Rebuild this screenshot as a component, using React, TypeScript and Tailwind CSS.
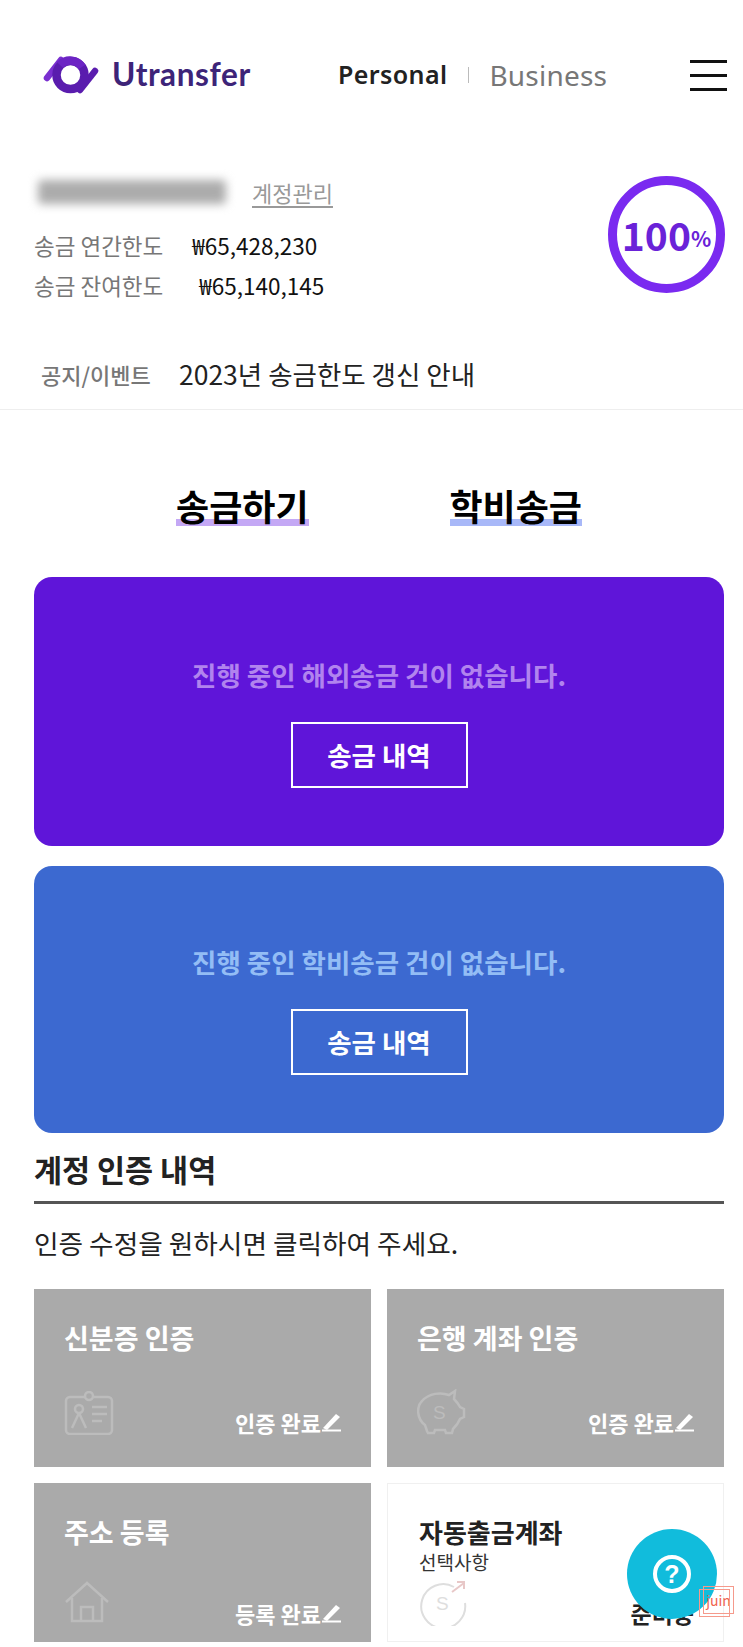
import React from "react";

const Logo = () => (
  <svg width="56" height="40" viewBox="0 0 56 40" fill="none" className="shrink-0">
    <path d="M4 23 L18 5" stroke="#7a2fd0" strokeWidth="6.5" strokeLinecap="round" />
    <path d="M52 16 L37 35" stroke="#5a1cae" strokeWidth="6.5" strokeLinecap="round" />
    <circle cx="27.5" cy="20" r="14" stroke="#5a1cae" strokeWidth="8.5" />
    <path d="M17 10 A14 14 0 0 1 39 12" stroke="#6c24c4" strokeWidth="8.5" />
  </svg>
);

const Pencil = () => (
  <svg width="22" height="20" viewBox="0 0 22 20" fill="none" className="shrink-0">
    <path d="M2 16 L15 2 L19 5 L6 18 Z" fill="#fff" />
    <path d="M1 18.5 H20" stroke="#fff" strokeWidth="2" />
  </svg>
);

const IdIcon = () => (
  <svg width="50" height="44" viewBox="0 0 50 44" fill="none" stroke="#bcbcbc" strokeWidth="2.5" className="shrink-0">
    <rect x="2" y="6" width="46" height="37" rx="4" />
    <circle cx="25" cy="5" r="4" fill="#aaa" />
    <circle cx="15" cy="18" r="4" />
    <path d="M15 22 L8 37 M15 22 L22 37" />
    <path d="M28 16 H43 M28 23 H43 M28 30 H38" />
  </svg>
);

const PigIcon = () => (
  <svg width="50" height="46" viewBox="0 0 50 46" fill="none" stroke="#bcbcbc" strokeWidth="2.5" className="shrink-0">
    <path d="M10 42 L8 36 C0 30 -1 18 5 12 C12 4 24 3 32 6 L38 2 L37 10 C40 13 42 16 43 18 L47 20 V28 L43 30 C41 35 38 38 36 40 L35 44 H29 L28 41 H18 L17 44 H11 Z" />
    <text x="16" y="30" fontSize="19" fill="#bcbcbc" stroke="none" fontFamily="Liberation Sans, sans-serif">S</text>
  </svg>
);

const HouseIcon = () => (
  <svg width="46" height="42" viewBox="0 0 46 42" fill="none" stroke="#bcbcbc" strokeWidth="2.5" className="shrink-0">
    <path d="M2 21 L23 2 L44 21" />
    <path d="M8 17 V40 H38 V17" />
    <path d="M17 40 V26 H29 V40" />
  </svg>
);

const DollarIcon = () => (
  <svg width="48" height="46" viewBox="0 0 48 46" fill="none" stroke="#dedede" strokeWidth="2" className="shrink-0">
    <path d="M35 7 A22 22 0 1 0 46 23" />
    <path d="M33 12 L45 3 M38 2 H45 V9" stroke="#e8c8c8" />
    <text x="17" y="30" fontSize="19" fill="#dedede" stroke="none" fontFamily="Liberation Sans, sans-serif">S</text>
  </svg>
);

const Help = () => (
  <svg width="40" height="40" viewBox="0 0 40 40" fill="none">
    <circle cx="20" cy="20" r="17" stroke="#fff" strokeWidth="4" />
    <text x="20" y="29" textAnchor="middle" fontSize="25" fontWeight="700" fill="#fff" fontFamily="Liberation Sans, sans-serif">?</text>
  </svg>
);

const Pending = ({ label, bg, text, h, top }: { label: string; bg: string; text: string; h: string; top: string }) => (
  <div className={`flex flex-col items-center rounded-[18px] ${h} ${top} ${bg}`}>
    <p className={`text-[26.5px] leading-[34px] font-bold ${text}`}>{label}</p>
    <div className="mt-[30px] flex h-[66px] w-[177px] items-center justify-center border-2 border-white text-[26.5px] font-bold text-white">
      송금 내역
    </div>
  </div>
);

const Done = ({ title, status, icon, h, pb, iconMb }: { title: string; status: string; icon: React.ReactNode; h: string; pb: string; iconMb: string }) => (
  <div className={`flex flex-col justify-between bg-[#aaaaaa] pt-[31px] pr-[28px] pl-[30px] ${h} ${pb}`}>
    <p className="text-[27px] leading-[36px] font-bold text-white">{title}</p>
    <div className="flex items-end justify-between">
      <div className={iconMb}>{icon}</div>
      <div className="flex items-center text-[22px] leading-[32px] font-bold text-white">
        {status}
        <Pencil />
      </div>
    </div>
  </div>
);

export default function App() {
  return (
    <div className="relative h-[1647px] w-[743px] overflow-hidden bg-white font-['Noto_Sans_CJK_KR',sans-serif] text-[#111]">
      <header className="flex h-[150px] items-center pr-[16px] pl-[43px]">
        <Logo />
        <span className="ml-[13px] w-[231px] font-['Lato',sans-serif] text-[31.5px] font-bold tracking-[0.6px] text-[#3d2478]">Utransfer</span>
        <span className="ml-[-5px] font-['Noto_Sans',sans-serif] text-[25px] font-semibold tracking-[0.4px] text-[#222]">Personal</span>
        <span className="ml-[21px] h-[16px] w-px bg-[#bbb]" />
        <span className="ml-[20px] font-['Noto_Sans',sans-serif] text-[28px] tracking-[0.2px] text-[#777]">Business</span>
        <div className="ml-auto flex w-[37px] flex-col gap-[11px]">
          <span className="h-[3px] bg-[#111]" />
          <span className="h-[3px] bg-[#111]" />
          <span className="h-[3px] bg-[#111]" />
        </div>
      </header>

      <section className="flex h-[193px] justify-between pt-[26px] pr-[18px] pl-[34px]">
        <div>
          <div className="flex h-[32px] items-center">
            <div className="ml-[4px] h-[24px] w-[188px] rounded-sm bg-[#acacac] blur-[5px]" />
            <span className="ml-[26px] text-[22px] text-[#999] underline underline-offset-4">계정관리</span>
          </div>
          <div className="mt-[18px] flex h-[40px] items-center text-[22.5px] text-[#777]">
            송금 연간한도
            <span className="ml-[29px] text-[22.5px] text-[#111]">₩65,428,230</span>
          </div>
          <div className="flex h-[40px] items-center text-[22.5px] text-[#777]">
            송금 잔여한도
            <span className="ml-[36px] text-[22.5px] text-[#111]">₩65,140,145</span>
          </div>
        </div>
        <div className="flex h-[117px] w-[117px] items-center justify-center rounded-full border-[9px] border-[#7a2af0] font-bold text-[#6a22d8]">
          <span className="text-[39px] leading-none">100</span>
          <span className="mt-[8px] text-[21px] leading-none">%</span>
        </div>
      </section>

      <section className="flex h-[67px] items-start border-b border-[#eeeeee] pl-[41px]">
        <span className="w-[138px] text-[22px] leading-[62px] font-medium text-[#777]">공지/이벤트</span>
        <span className="text-[26.5px] leading-[62px] text-[#222]">2023년 송금한도 갱신 안내</span>
      </section>

      <nav className="flex h-[167px] justify-center gap-[141px] pt-[70px] pr-[19px] pl-[34px]">
        <span className="h-[50px] bg-[linear-gradient(transparent_78%,#c4a8f5_78%,#c4a8f5_92%,transparent_92%)] text-[36px] leading-[50px] font-bold text-black">송금하기</span>
        <span className="h-[50px] bg-[linear-gradient(transparent_78%,#a8b8f8_78%,#a8b8f8_92%,transparent_92%)] text-[36px] leading-[50px] font-bold text-black">학비송금</span>
      </nav>

      <main className="flex flex-col pr-[19px] pl-[34px]">
        <Pending label="진행 중인 해외송금 건이 없습니다." bg="bg-[#5f15d9]" text="text-[#b184ee]" h="h-[269px]" top="pt-[81px]" />
        <div className="h-[20px]" />
        <Pending label="진행 중인 학비송금 건이 없습니다." bg="bg-[#3c69d0]" text="text-[#93bdf5]" h="h-[267px]" top="pt-[79px]" />

        <h2 className="mt-[14px] text-[30.5px] leading-[44px] font-bold text-[#222]">계정 인증 내역</h2>
        <div className="mt-[10px] h-[3px] bg-[#555]" />
        <p className="mt-[20px] text-[26.7px] leading-[38px] text-[#222]">인증 수정을 원하시면 클릭하여 주세요.</p>

        <div className="mt-[27px] grid grid-cols-2 gap-4">
          <Done title="신분증 인증" status="인증 완료" icon={<IdIcon />} h="h-[178px]" pb="pb-[29px]" iconMb="mb-[3px]" />
          <Done title="은행 계좌 인증" status="인증 완료" icon={<PigIcon />} h="h-[178px]" pb="pb-[29px]" iconMb="mb-[3px]" />
          <Done title="주소 등록" status="등록 완료" icon={<HouseIcon />} h="h-[159px]" pb="pb-[13px]" iconMb="mb-[6px]" />
          <div className="flex h-[159px] flex-col border border-[#f0f0f0] pt-[28px] pr-[29px] pl-[31px]">
            <p className="text-[26px] leading-[40px] font-bold text-[#222]">자동출금계좌</p>
            <p className="text-[19px] leading-[20px] text-[#333]">선택사항</p>
            <div className="mt-[8px] flex items-start justify-between">
              <DollarIcon />
              <span className="mt-[17px] text-[23px] leading-[32px] font-bold text-[#222]">준비중</span>
            </div>
          </div>
        </div>
      </main>

      <div className="absolute top-[1529px] left-[627px] flex h-[90px] w-[90px] items-center justify-center rounded-full bg-[#11bcdc]">
        <Help />
      </div>
      <div className="absolute top-[1586px] left-[703px] flex h-[28px] w-[31px] items-center justify-center border border-[#f59a8c] text-[14px] leading-none text-[#f0654f]">
        juin
      </div>
      <div className="absolute top-[1589px] left-[699px] h-[28px] w-[31px] border border-[#f59a8c]" />
    </div>
  );
}
